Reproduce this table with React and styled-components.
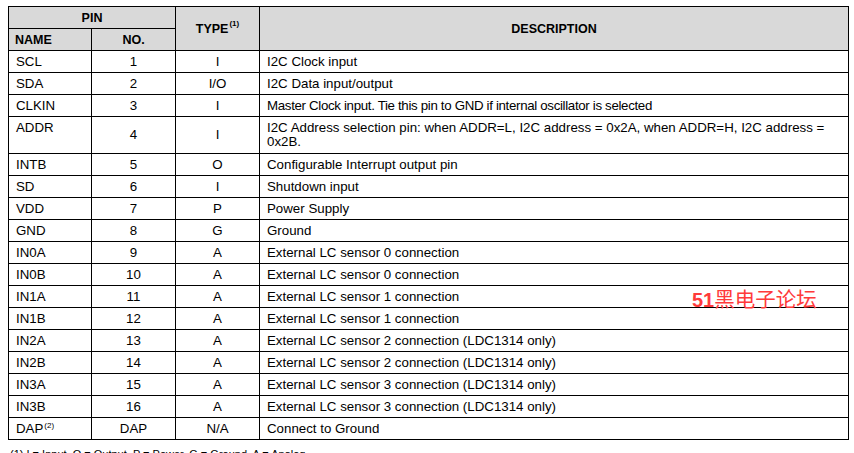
import React from "react";
import styled, { createGlobalStyle } from "styled-components";

const Global = createGlobalStyle`
  html, body { margin: 0; padding: 0; background: #fff; }
  body { font-family: "Liberation Sans", Arial, sans-serif; color: #000; }
`;

const Page = styled.div`
  position: relative;
  width: 854px;
  height: 453px;
  overflow: hidden;
  padding: 6px 0 0 8px;
  box-sizing: border-box;
`;

const Table = styled.table`
  border-collapse: collapse;
  table-layout: fixed;
  width: 840px;
  font-size: 13.3px;
`;

const HeadCell = styled.th`
  background: #d9d9d9;
  border: 1px solid #000;
  height: 22px;
  padding: 0 6px;
  font-weight: bold;
  font-size: 12.5px;
  text-align: ${(p) => p.$align || "center"};
  vertical-align: middle;
  box-sizing: border-box;
`;

const Row = styled.tr`
  height: ${(p) => (p.$tall ? "37px" : "22px")};
`;

const Cell = styled.td`
  border: 1px solid #000;
  padding: ${(p) => (p.$mid ? "0 6px" : "4px 6px 0 7px")};
  line-height: 14px;
  letter-spacing: ${(p) => (p.$tight ? "-0.33px" : "0")};
  text-align: ${(p) => (p.$center ? "center" : "left")};
  vertical-align: ${(p) => (p.$mid ? "middle" : "top")};
  box-sizing: border-box;
`;

const Sup = styled.sup`
  font-size: 8px;
  vertical-align: top;
  position: relative;
  top: -3px;
  font-weight: ${(p) => (p.$bold ? "bold" : "normal")};
  margin-left: 1px;
`;

const Footnote = styled.div`
  font-size: 11px;
  margin: 8px 0 0 2px;
`;

const Watermark = styled.div`
  position: absolute;
  left: 692px;
  top: 283px;
  color: #ff3a3a;
  font-size: 20.5px;
  font-family: "Noto Sans CJK SC", sans-serif;
`;

const Num = styled.span`
  font-family: "Liberation Sans", Arial, sans-serif;
  font-weight: bold;
  font-size: 20px;
`;

const rows = [
  ["SCL", "1", "I", "I2C Clock input"],
  ["SDA", "2", "I/O", "I2C Data input/output"],
  ["CLKIN", "3", "I", "Master Clock input. Tie this pin to GND if internal oscillator is selected", false, true],
  [
    "ADDR",
    "4",
    "I",
    <>
      I2C Address selection pin: when ADDR=L, I2C address = 0x2A, when ADDR=H, I2C address =
      <br />
      0x2B.
    </>,
    true,
  ],
  ["INTB", "5", "O", "Configurable Interrupt output pin"],
  ["SD", "6", "I", "Shutdown input"],
  ["VDD", "7", "P", "Power Supply"],
  ["GND", "8", "G", "Ground"],
  ["IN0A", "9", "A", "External LC sensor 0 connection"],
  ["IN0B", "10", "A", "External LC sensor 0 connection"],
  ["IN1A", "11", "A", "External LC sensor 1 connection"],
  ["IN1B", "12", "A", "External LC sensor 1 connection"],
  ["IN2A", "13", "A", "External LC sensor 2 connection (LDC1314 only)"],
  ["IN2B", "14", "A", "External LC sensor 2 connection (LDC1314 only)"],
  ["IN3A", "15", "A", "External LC sensor 3 connection (LDC1314 only)"],
  ["IN3B", "16", "A", "External LC sensor 3 connection (LDC1314 only)"],
];

export default function App() {
  return (
    <Page>
      <Global />
      <Table>
        <colgroup>
          <col style={{ width: 83 }} />
          <col style={{ width: 84 }} />
          <col style={{ width: 84 }} />
          <col style={{ width: 589 }} />
        </colgroup>
        <thead>
          <tr>
            <HeadCell colSpan={2}>PIN</HeadCell>
            <HeadCell rowSpan={2}>
              TYPE<Sup $bold>(1)</Sup>
            </HeadCell>
            <HeadCell rowSpan={2}>DESCRIPTION</HeadCell>
          </tr>
          <tr>
            <HeadCell $align="left">NAME</HeadCell>
            <HeadCell>NO.</HeadCell>
          </tr>
        </thead>
        <tbody>
          {rows.map((r) => (
            <Row key={r[0]} $tall={r[4]}>
              <Cell>{r[0]}</Cell>
              <Cell $center $mid>{r[1]}</Cell>
              <Cell $center $mid>{r[2]}</Cell>
              <Cell $tight={r[5]}>{r[3]}</Cell>
            </Row>
          ))}
          <Row>
            <Cell>
              DAP<Sup>(2)</Sup>
            </Cell>
            <Cell $center $mid>DAP</Cell>
            <Cell $center $mid>N/A</Cell>
            <Cell>Connect to Ground</Cell>
          </Row>
        </tbody>
      </Table>
      <Footnote>(1) I = Input, O = Output, P = Power, G = Ground, A = Analog</Footnote>
      <Watermark>
        <Num>51</Num>黑电子论坛
      </Watermark>
    </Page>
  );
}
